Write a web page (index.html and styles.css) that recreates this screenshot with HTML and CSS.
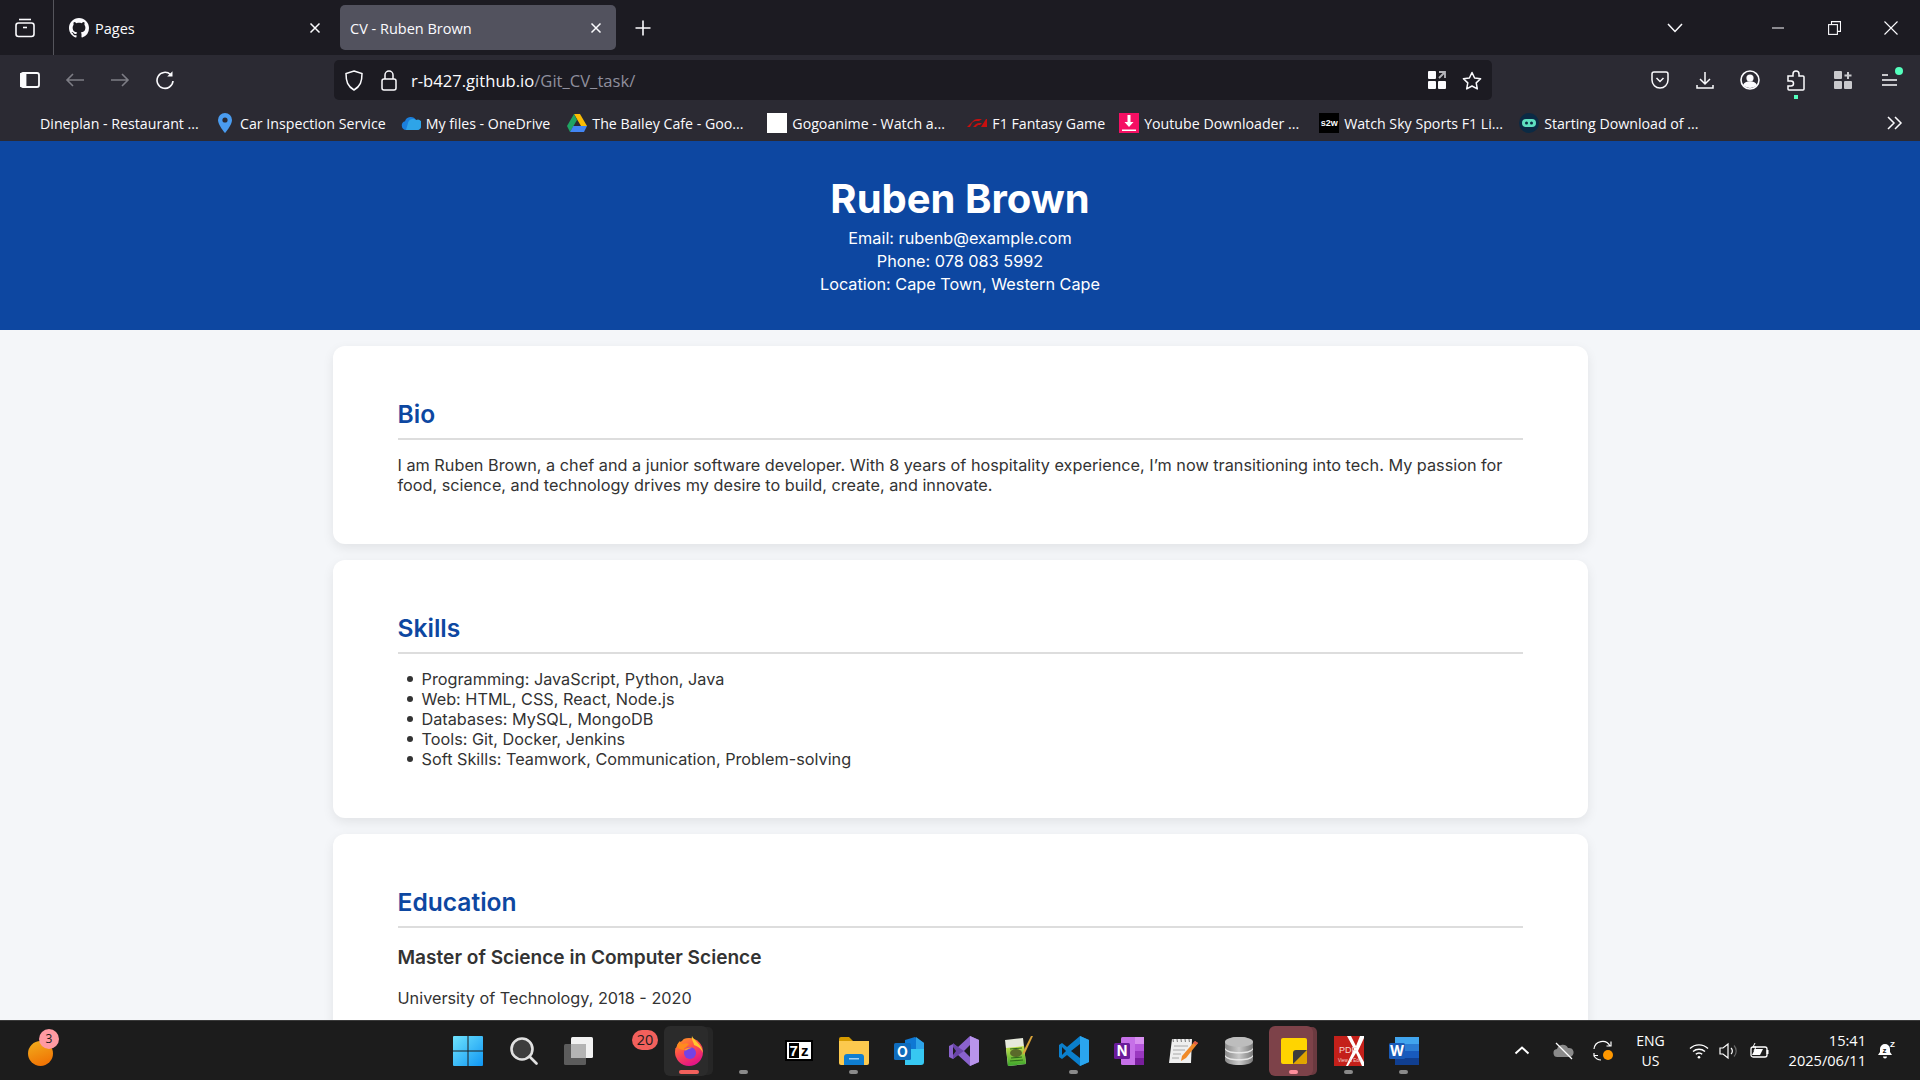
FILE: index.html
```html
<!DOCTYPE html>
<html lang="en">
<head>
  <meta charset="UTF-8">
  <title>CV - Ruben Brown</title>
  <link rel="stylesheet" href="styles.css">
</head>
<body>
  <div class="tabbar">
    <div class="tab-view">
      <svg width="20" height="20" viewBox="0 0 20 20" fill="none" stroke="#fbfbfe" stroke-width="1.6"><path d="M4 1.500h12"/><rect x="1" y="5" width="18" height="13.500" rx="2.500"/><path d="M8 9.500h4"/></svg>
    </div>
    <div class="tab tab-first">
      <svg width="20" height="20" viewBox="0 0 16 16" fill="#fbfbfe"><path d="M8 0C3.58 0 0 3.58 0 8c0 3.54 2.29 6.53 5.47 7.59.4.07.55-.17.55-.38 0-.19-.01-.82-.01-1.49-2.01.37-2.53-.49-2.69-.94-.09-.23-.48-.94-.82-1.13-.28-.15-.68-.52-.01-.53.63-.01 1.08.58 1.23.82.72 1.21 1.87.87 2.33.66.07-.52.28-.87.51-1.07-1.78-.2-3.64-.89-3.64-3.95 0-.87.31-1.59.82-2.15-.08-.2-.36-1.02.08-2.12 0 0 .67-.21 2.2.82.64-.18 1.32-.27 2-.27.68 0 1.36.09 2 .27 1.53-1.04 2.2-.82 2.2-.82.44 1.1.16 1.92.08 2.12.51.56.82 1.27.82 2.15 0 3.07-1.87 3.75-3.65 3.95.29.25.54.73.54 1.48 0 1.07-.01 1.93-.01 2.2 0 .21.15.46.55.38A8.013 8.013 0 0016 8c0-4.42-3.58-8-8-8z"/></svg>
      <span class="tab-title">Pages</span>
      <svg width="12" height="12" viewBox="0 0 12 12" stroke="#fbfbfe" stroke-width="1.5"><path d="M1.500 1.500l9 9M10.500 1.500l-9 9"/></svg>
    </div>
    <div class="tab tab-active">
      <span class="tab-title">CV - Ruben Brown</span>
      <svg width="12" height="12" viewBox="0 0 12 12" stroke="#fbfbfe" stroke-width="1.5"><path d="M1.500 1.500l9 9M10.500 1.500l-9 9"/></svg>
    </div>
    <svg class="new-tab" width="16" height="16" viewBox="0 0 16 16" stroke="#fbfbfe" stroke-width="1.6"><path d="M8 .5v15M.5 8h15"/></svg>
    <div class="win-controls">
      <svg class="tab-list" width="16" height="10" viewBox="0 0 16 10" fill="none" stroke="#fbfbfe" stroke-width="1.5"><path d="M1 1l7 7.500L15 1"/></svg>
      <svg class="win-min" width="12" height="2" viewBox="0 0 12 2" stroke="#fbfbfe"><path d="M0 1h12"/></svg>
      <svg class="win-max" width="13" height="14" viewBox="0 0 13 14" fill="none" stroke="#fbfbfe" stroke-width="1.100"><rect x=".6" y="3.600" width="8.800" height="9.800"/><path d="M3.500 3.500V.6h9v9.800H9.500"/></svg>
      <svg class="win-close" width="14" height="14" viewBox="0 0 14 14" stroke="#fbfbfe" stroke-width="1.100"><path d="M.5.5l13 13M13.500.5l-13 13"/></svg>
    </div>
  </div>

  <div class="toolbar">
    <svg class="tool-side" width="20" height="16" viewBox="0 0 20 16" fill="none" stroke="#fbfbfe" stroke-width="1.800"><rect x="1" y="1" width="18" height="14" rx="2"/><path d="M1 2h4.500v12H1z" fill="#fbfbfe"/></svg>
    <svg class="tool-back" width="20" height="16" viewBox="0 0 20 16" fill="none" stroke="#7d7d85" stroke-width="1.6"><path d="M19 8H2M8 2L2 8l6 6"/></svg>
    <svg class="tool-fwd" width="20" height="16" viewBox="0 0 20 16" fill="none" stroke="#7d7d85" stroke-width="1.6"><path d="M1 8h17M12 2l6 6-6 6"/></svg>
    <svg class="tool-reload" width="20" height="20" viewBox="0 0 20 20" fill="none" stroke="#fbfbfe" stroke-width="1.6"><path d="M15.500 4.500A8 8 0 1 0 18 11"/><path d="M17.500 1.200v5.300h-5.300z" fill="#fbfbfe" stroke="none"/></svg>
    <div class="urlbar">
      <svg width="18" height="21" viewBox="0 0 18 21" fill="none" stroke="#fbfbfe" stroke-width="1.5"><path d="M9 1l8 2.600c0 8-1.600 12.600-8 16.400C2.600 16.200 1 11.600 1 3.600z"/></svg>
      <svg class="url-lock" width="16" height="21" viewBox="0 0 16 21" fill="none" stroke="#fbfbfe" stroke-width="1.5"><rect x="1" y="9" width="14" height="11" rx="2"/><path d="M4 9V5a4 4 0 0 1 8 0v4"/></svg>
      <span class="url-text">r-b427.github.io<span class="url-path">/Git_CV_task/</span></span>
      <svg width="18" height="18" viewBox="0 0 18 18" fill="#fbfbfe"><rect width="8" height="8" rx="1"/><rect y="10" width="8" height="8" rx="1"/><rect x="10" y="10" width="8" height="8" rx="1"/><path d="M11 1h6v6M16.500 1.500L11 7" fill="none" stroke="#b5b5bb" stroke-width="1.800"/></svg>
      <svg class="url-star" width="20" height="19" viewBox="0 0 20 19" fill="none" stroke="#fbfbfe" stroke-width="1.500"><path d="M10 1.500l2.600 5.500 6 .8-4.400 4.100 1.100 6L10 15l-5.300 2.900 1.100-6L1.400 7.800l6-.8z" stroke-linejoin="round"/></svg>
    </div>
    <div class="tool-right">
      <svg width="18" height="18" viewBox="0 0 18 18" fill="none" stroke="#fbfbfe" stroke-width="1.500"><path d="M1 3a2 2 0 0 1 2-2h12a2 2 0 0 1 2 2v6a8 8 0 0 1-16 0z"/><path d="M5.500 7L9 10.500 12.500 7"/></svg>
      <svg width="18" height="19" viewBox="0 0 18 19" fill="none" stroke="#fbfbfe" stroke-width="1.500"><path d="M9 1v12M4 8l5 5 5-5M1 14v3h16v-3"/></svg>
      <svg class="tool-account" width="20" height="20" viewBox="0 0 20 20" fill="none" stroke="#fbfbfe" stroke-width="1.600"><circle cx="10" cy="10" r="9"/><circle cx="10" cy="8" r="2.800" fill="#fbfbfe"/><path d="M4 15c1-2.500 3-3 6-3s5 .5 6 3c-3 3-9 3-12 0z" fill="#fbfbfe"/></svg>
      <div class="tool-ext">
        <svg width="18" height="21" viewBox="0 0 18 21" fill="none" stroke="#fbfbfe" stroke-width="1.500"><path d="M1 6h5V4a3 3 0 0 1 6 0v2h4a1 1 0 0 1 1 1v12a1 1 0 0 1-1 1H2a1 1 0 0 1-1-1v-3h3a2.500 2.500 0 0 0 0-5H1z"/></svg>
        <span class="ext-dot"></span>
      </div>
      <svg class="tool-apps" width="18" height="18" viewBox="0 0 18 18" fill="#c9c9cd"><rect width="8" height="8" rx="1"/><rect y="10" width="8" height="8" rx="1"/><rect x="10" y="10" width="8" height="8" rx="1"/><path d="M13 1h2v2.500h2.500v2H15V8h-2V5.500h-2.500v-2H13z"/></svg>
      <div class="tool-menu">
        <svg width="16" height="14" viewBox="0 0 16 14" stroke="#fbfbfe" stroke-width="1.500"><path d="M0 2h6M0 7h15M0 12h15"/></svg>
        <span class="menu-dot"></span>
      </div>
    </div>
  </div>

  <div class="bookmarks">
    <div class="bm bm-long">
      <span class="bm-noicon"></span>
      <span>Dineplan - Restaurant ...</span>
    </div>
    <div class="bm">
      <svg width="20" height="20" viewBox="-3 0 20 20"><path d="M7 0a7 7 0 0 0-7 7c0 5 7 13 7 13s7-8 7-13a7 7 0 0 0-7-7z" fill="#4a9cf0"/><circle cx="7" cy="7" r="2.600" fill="#2b2a33"/></svg>
      <span>Car Inspection Service</span>
    </div>
    <div class="bm bm-drive">
      <svg width="20" height="14" viewBox="0 0 20 14"><path d="M5 14a4.500 4.500 0 0 1-1-8.800A6 6 0 0 1 15 4a4.500 4.500 0 0 1 1 10z" fill="#1b7fdc"/><path d="M7 7a5 5 0 0 1 8-3 4 4 0 0 1 5 6c0 2-1 4-4 4H5z" fill="#2ea4e8"/></svg>
      <span>My files - OneDrive</span>
    </div>
    <div class="bm bm-long">
      <svg width="20" height="18" viewBox="0 0 20 18"><path d="M7 0h6l7 12h-6z" fill="#fbbc04"/><path d="M7 0l3 6-7 12-3-6z" fill="#1fa463"/><path d="M3 18l3.300-6H20l-3 6z" fill="#4285f4"/></svg>
      <span>The Bailey Cafe - Goo...</span>
    </div>
    <div class="bm bm-long">
      <span class="bm-blank"></span>
      <span>Gogoanime - Watch a...</span>
    </div>
    <div class="bm bm-f1">
      <svg width="20" height="8" viewBox="0 0 20 8" fill="#c80f0f"><path d="M0 8l5-5c2-2 3-3 6-3h4l-3 2H9C7 2 6 3 5 4L3 8zM6 8l2-2c1-1 2-2 4-2h3l-2 2h-1c-1 0-2 .5-3 2zM14 8l5-8h1v8z"/></svg>
      <span>F1 Fantasy Game</span>
    </div>
    <div class="bm bm-long">
      <svg width="20" height="20" viewBox="0 0 20 20"><rect width="20" height="20" fill="#f50f63"/><path d="M8.500 2h3v7h3L10 14 5.500 9h3z" fill="#fff"/><path d="M3 16.500h14v1.500H3z" fill="#fff"/></svg>
      <span>Youtube Downloader ...</span>
    </div>
    <div class="bm bm-long">
      <span class="bm-s2w">s2w</span>
      <span>Watch Sky Sports F1 Li...</span>
    </div>
    <div class="bm bm-long">
      <svg width="20" height="20" viewBox="0 0 20 20"><circle cx="10" cy="10" r="10" fill="#0b2a44"/><rect x="3" y="6" width="14" height="8" rx="4" fill="#5fe0c0"/><circle cx="7.500" cy="10" r="1.500" fill="#0b2a44"/><circle cx="12.500" cy="10" r="1.500" fill="#0b2a44"/></svg>
      <span>Starting Download of ...</span>
    </div>
    <svg class="bm-more" width="16" height="14" viewBox="0 0 16 14" fill="none" stroke="#fbfbfe" stroke-width="1.500"><path d="M1 1l6 6-6 6M8 1l6 6-6 6"/></svg>
  </div>

  <div class="page">
    <header class="cv-header">
      <h1>Ruben Brown</h1>
      <p>Email: rubenb@example.com</p>
      <p>Phone: 078 083 5992</p>
      <p>Location: Cape Town, Western Cape</p>
    </header>
    <main class="cv-main">
      <section class="card">
        <h2>Bio</h2>
        <p>I am Ruben Brown, a chef and a junior software developer. With 8 years of hospitality experience, I’m now transitioning into tech. My passion for food, science, and technology drives my desire to build, create, and innovate.</p>
      </section>
      <section class="card">
        <h2>Skills</h2>
        <ul>
          <li>Programming: JavaScript, Python, Java</li>
          <li>Web: HTML, CSS, React, Node.js</li>
          <li>Databases: MySQL, MongoDB</li>
          <li>Tools: Git, Docker, Jenkins</li>
          <li>Soft Skills: Teamwork, Communication, Problem-solving</li>
        </ul>
      </section>
      <section class="card">
        <h2>Education</h2>
        <h3>Master of Science in Computer Science</h3>
        <p>University of Technology, 2018 - 2020</p>
      </section>
    </main>
  </div>

  <div class="taskbar">
    <div class="widget">
      <span class="widget-blob"></span>
      <span class="widget-badge">3</span>
    </div>
    <div class="task-icons">
      <div class="slot slot-nudge">
        <svg width="30" height="30" viewBox="0 0 30 30"><defs><linearGradient id="winG" x1="0" y1="0" x2="1" y2="1"><stop offset="0" stop-color="#6fe3fd"/><stop offset="1" stop-color="#0f96f3"/></linearGradient></defs><path d="M1 0h13.500v14.500H0V1a1 1 0 0 1 1-1zM15.500 0H29a1 1 0 0 1 1 1v13.500H15.500zM0 15.500h14.500V30H1a1 1 0 0 1-1-1zM15.500 15.500H30V29a1 1 0 0 1-1 1H15.500z" fill="url(#winG)"/></svg>
      </div>
      <div class="slot">
        <svg width="28" height="28" viewBox="0 0 28 28" fill="#3d3d3d" stroke="#e0e0e0" stroke-width="2.600"><circle cx="12" cy="12" r="10.500"/><path d="M19.500 19.500l7 7" stroke-linecap="round"/></svg>
      </div>
      <div class="slot slot-nudge">
        <svg width="30" height="30" viewBox="0 0 30 30"><rect x="1" y="8" width="22" height="21" rx="1.500" fill="#5c5c5c"/><rect x="8" y="1" width="22" height="21" rx="1.500" fill="#f2f2f2"/><rect x="8" y="8" width="15" height="14" fill="#b4b4b4"/></svg>
      </div>
      <div class="slot">
        <span class="count-badge">20</span>
      </div>
      <div class="slot slot-active">
        <svg width="30" height="30" viewBox="0 0 30 30"><defs><linearGradient id="foxG" x1="0" y1="0" x2=".5" y2="1"><stop offset="0" stop-color="#ffa21e"/><stop offset=".5" stop-color="#ff4f4a"/><stop offset="1" stop-color="#e31587"/></linearGradient></defs><circle cx="15" cy="16" r="14" fill="url(#foxG)"/><path d="M0 0h12L8 5 4 7 2 12 0 12z" fill="#2b2b2b"/><path d="M18 0c1 4 10 8 11 17-2-5-6-7-9-8 0-3-3-5-2-9z" fill="#ffc72e"/><path d="M3 11c0-3 2-5 3-6 0 2 1 3 3 3 2-1 4-1 6 0l-3 3c-2 1-2 2-2 3-3 0-5-1-7-3z" fill="#ff8a1e"/><circle cx="16" cy="17" r="6" fill="#7542e5"/><path d="M10 14c2-2 5-3 8-2-2 0-4 1-5 2-1 .5-2 .5-3 0z" fill="#ff9a2e"/></svg>
        <span class="indicator indicator-red"></span>
      </div>
      <div class="slot">
        <span class="indicator"></span>
      </div>
      <div class="slot">
        <div class="icon-7z"><span class="seven">7</span><span>z</span></div>
      </div>
      <div class="slot">
        <svg width="30" height="28" viewBox="0 0 30 28"><path d="M0 2a2 2 0 0 1 2-2h8l4 4H0z" fill="#d79b00"/><path d="M0 4h30v22a2 2 0 0 1-2 2H2a2 2 0 0 1-2-2z" fill="#fcc94e"/><path d="M5 20a3 3 0 0 1 3-3h14a3 3 0 0 1 3 3v8H5z" fill="#0f7ed1"/><rect x="10" y="21" width="10" height="1.500" fill="#9fd0f5"/></svg>
        <span class="indicator"></span>
      </div>
      <div class="slot">
        <svg width="30" height="28" viewBox="0 0 30 28"><path d="M11 3l10-3 9 6v6H11z" fill="#0f78d4"/><path d="M22 0l8 6v6h-8z" fill="#2da3e8"/><path d="M11 12h19v13a3 3 0 0 1-3 3H11z" fill="#37c8f2"/><rect y="6" width="17" height="17" rx="1.500" fill="#0f6cbd"/><text class="icon-letter" x="8.500" y="20" text-anchor="middle">O</text></svg>
      </div>
      <div class="slot">
        <svg width="30" height="30" viewBox="0 0 30 30"><path d="M21 0l9 4v22l-9 4-12-11-5 4-4-2V10l4-2 5 3z" fill="#8a62cc"/><path d="M21 0l9 4v22l-9 4z" fill="#b994ec"/><path d="M9 11l6 4-6 4-5 4V7z" fill="#6a45a8"/><path d="M21 9l-6 6 6 6z" fill="#1c1c1c"/><path d="M4 11l3 4-3 4z" fill="#1c1c1c"/></svg>
      </div>
      <div class="slot">
        <svg width="28" height="30" viewBox="0 0 28 30"><defs><linearGradient id="nppG" x1="0" y1="0" x2="0" y2="1"><stop offset="0" stop-color="#c6e24e"/><stop offset="1" stop-color="#3aa52a"/></linearGradient></defs><path d="M0 4l18-2 3 26-18 2z" fill="#e6e9dc"/><path d="M1 12l18-2 2 18-18 2z" fill="url(#nppG)"/><ellipse cx="11" cy="17" rx="6" ry="4" fill="#5a6a2a"/><path d="M5 13l12-1M6 22l11-1M5 25l13-1" stroke="#2f6a1c" stroke-width="1.200"/><path d="M26 0h2l-8 17-2.500 2 .5-3z" fill="#d9a33a"/></svg>
      </div>
      <div class="slot">
        <svg width="30" height="30" viewBox="0 0 30 30"><path d="M21 0l9 4v22l-9 4L8 19l-5 4-3-2V9l3-2 5 4z" fill="#0b7fcc"/><path d="M21 0l9 4v22l-9 4z" fill="#2aa5ee"/><path d="M21 8l-9 7 9 7z" fill="#1c1c1c"/><path d="M3 11l4 4-4 4z" fill="#1c1c1c"/></svg>
        <span class="indicator"></span>
      </div>
      <div class="slot">
        <svg width="30" height="28" viewBox="0 0 30 28"><rect x="7" width="23" height="28" rx="1.500" fill="#c670e8"/><rect x="21" width="9" height="7" fill="#d88ff0"/><rect x="21" y="7" width="9" height="7" fill="#b658dc"/><rect x="21" y="14" width="9" height="7" fill="#9a38c0"/><rect x="21" y="21" width="9" height="7" fill="#7a1f9e"/><rect y="6" width="16" height="16" rx="1.500" fill="#6a1b9a"/><text class="icon-letter" x="8" y="19" text-anchor="middle">N</text></svg>
      </div>
      <div class="slot">
        <svg width="30" height="26" viewBox="0 0 30 26"><path d="M3 1h20l-1 24H0z" fill="#efefef"/><path d="M4 1l.4 3M8 1l.4 3M12 1l.4 3M16 1l.4 3M20 1l.4 3" stroke="#777"/><path d="M5 8h14M4 12h12M4 16h8M3 20h7" stroke="#a8a8a8"/><path d="M26 3l3 2-12 15-5 3 1-5z" fill="#f08a28"/><path d="M26 3l3 2-2 2-3-2z" fill="#e05a4a"/></svg>
      </div>
      <div class="slot">
        <svg width="30" height="28" viewBox="0 0 30 28"><defs><linearGradient id="dbG" x1="0" y1="0" x2="1" y2="0"><stop offset="0" stop-color="#8a8a8a"/><stop offset=".5" stop-color="#c8c8c8"/><stop offset="1" stop-color="#7a7a7a"/></linearGradient></defs><path d="M1 5c0-3 6-5 14-5s14 2 14 5v18c0 3-6 5-14 5S1 26 1 23z" fill="url(#dbG)"/><ellipse cx="15" cy="5" rx="14" ry="5" fill="#bdbdbd"/><path d="M1 11c2 3 7 4 14 4s12-1 14-4v1.500c-2 3-7 4-14 4s-12-1-14-4zM1 18c2 3 7 4 14 4s12-1 14-4v1.500c-2 3-7 4-14 4s-12-1-14-4z" fill="#e8e8e8"/></svg>
      </div>
      <div class="slot slot-sticky">
        <svg width="26" height="26" viewBox="0 0 26 26"><rect width="26" height="26" rx="2" fill="#ffd400"/><path d="M12 26L26 12v11a3 3 0 0 1-3 3z" fill="#e0a400"/><path d="M12 26v-11a3 3 0 0 1 3-3h11z" fill="#3c3c3c"/></svg>
        <span class="indicator indicator-pink"></span>
      </div>
      <div class="slot">
        <svg width="30" height="30" viewBox="0 0 30 30"><rect width="30" height="30" fill="#c4201a"/><path d="M13 0h4l5 10 4-10h4v2l-6 13 6 11v4h-2l-6-13-8 13h-2l8-17z" fill="#fff"/><text class="icon-pdf" x="5" y="17">PDF</text><text class="icon-pdf-sub" x="4" y="26">View &amp; Edit</text></svg>
        <span class="indicator"></span>
      </div>
      <div class="slot">
        <svg width="30" height="28" viewBox="0 0 30 28"><rect x="6" width="24" height="7" fill="#41a5ee"/><rect x="6" y="7" width="24" height="7" fill="#2b7cd3"/><rect x="6" y="14" width="24" height="7" fill="#185abd"/><rect x="6" y="21" width="24" height="7" fill="#103f91"/><rect y="6" width="16" height="16" rx="1.500" fill="#1a5bb8"/><text class="icon-letter" x="8" y="19" text-anchor="middle">W</text></svg>
        <span class="indicator"></span>
      </div>
    </div>
    <div class="tray">
      <svg class="tray-up" width="16" height="9" viewBox="0 0 16 9" fill="none" stroke="#fff" stroke-width="2"><path d="M1.500 7.500L8 1.500l6.500 6"/></svg>
      <svg class="tray-cloud" width="22" height="18" viewBox="0 0 22 18"><path d="M5 15a4 4 0 0 1-1-8A6 6 0 0 1 15 6a4.500 4.500 0 0 1 2 9z" fill="#8a8a8a"/><path d="M3 1l16 16" stroke="#fff" stroke-width="1.200"/></svg>
      <svg class="tray-sync" width="22" height="22" viewBox="0 0 22 22" fill="none" stroke="#fff" stroke-width="1.200"><path d="M1 9a8.500 8.500 0 0 1 16-3M18 1.500V6h-4.500M5 15.500H1M1 13v3c2 3 4 4 7 4"/><circle cx="15" cy="15" r="5" fill="#ff9800" stroke="none"/></svg>
      <div class="tray-lang"><span>ENG</span><span>US</span></div>
      <svg class="tray-wifi" width="20" height="16" viewBox="0 0 20 16" fill="none" stroke="#fff" stroke-width="1.400"><path d="M1 5.500a13 13 0 0 1 18 0M4 8.500a9 9 0 0 1 12 0M6.800 11.300a4.500 4.500 0 0 1 6.400 0"/><circle cx="10" cy="14.300" r="1.300" fill="#fff" stroke="none"/></svg>
      <svg class="tray-vol" width="20" height="18" viewBox="0 0 20 18" fill="none" stroke="#fff" stroke-width="1.200"><path d="M1 6h3l5-4v14l-5-4H1z"/><path d="M12 6a4 4 0 0 1 0 6"/><path d="M15 3.500a8 8 0 0 1 0 11" stroke="#666"/></svg>
      <svg class="tray-batt" width="20" height="16" viewBox="0 0 20 16" fill="none" stroke="#fff" stroke-width="1.300"><rect x="1" y="4" width="16" height="10" rx="2"/><path d="M17.500 7v4" stroke-width="2"/><path d="M2 12l3-6h8l-3 6z" fill="#fff" stroke="none"/><path d="M5 0L3 4h3L4 8" stroke-width="1"/></svg>
      <div class="tray-clock"><span>15:41</span><span>2025/06/11</span></div>
      <svg class="tray-bell" width="18" height="20" viewBox="0 0 18 20" fill="#fff"><path d="M7 3a5 5 0 0 0-5 5v3l-2 3h14l-2-3V8a5 5 0 0 0-5-5z"/><path d="M5 15.500h4a2 2 0 0 1-4 0z"/><text class="bell-z bell-z-in" x="4.500" y="12">z</text><text class="bell-z" x="12" y="6">Z</text></svg>
    </div>
  </div>
</body>
</html>
```

FILE: styles.css
```css
* {
  box-sizing: border-box;
}
body {
  margin: 0;
  height: 1080px;
  overflow: hidden;
  display: flex;
  flex-direction: column;
  background: #f4f6f9;
  font-family: Inter, "Noto Sans", sans-serif;
  color: #333;
}
svg {
  flex: none;
  display: block;
}

/* browser tabs */
.tabbar {
  height: 55px;
  flex: none;
  display: flex;
  align-items: center;
  background: #1c1b22;
  color: #fbfbfe;
  font: 14.5px "Open Sans", sans-serif;
}
.tab-view {
  width: 54px;
  height: 55px;
  padding-left: 15px;
  display: flex;
  align-items: center;
  border-right: 1px solid #55555c;
}
.tab {
  height: 45px;
  margin-left: 15px;
  display: flex;
  align-items: center;
}
.tab-first {
  width: 252px;
}
.tab-title {
  flex: 1;
  padding: 1px 0 0 6px;
}
.tab-active {
  width: 276px;
  margin-left: 19px;
  padding: 0 14px 0 4px;
  background: #52525e;
  border-radius: 5px;
}
.new-tab {
  margin-left: 19px;
}
.win-controls {
  margin-left: auto;
  display: flex;
  align-items: center;
}
.tab-list {
  margin-right: 89px;
}
.win-min {
  margin-right: 44px;
}
.win-max {
  margin-right: 43px;
}
.win-close {
  margin-right: 22px;
}

/* toolbar */
.toolbar {
  height: 45px;
  flex: none;
  display: flex;
  align-items: center;
  padding-top: 5px;
  background: #2b2a33;
}
.tool-side {
  margin-left: 20px;
}
.tool-back, .tool-fwd, .tool-reload {
  margin-left: 25px;
}
.urlbar {
  width: 1158px;
  height: 40px;
  margin-left: 159px;
  padding: 0 10px 0 11px;
  display: flex;
  align-items: center;
  background: #1c1b22;
  border-radius: 5px;
  color: #fbfbfe;
}
.url-lock {
  margin-left: 18px;
}
.url-text {
  flex: 1;
  margin-left: 14px;
  font: 16.6px "Open Sans", sans-serif;
}
.url-path {
  color: #8f8f9d;
}
.url-star {
  margin-left: 16px;
}
.tool-right {
  margin-left: 159px;
  display: flex;
  align-items: center;
  gap: 27px;
}
.tool-account {
  margin-left: -1px;
}
.tool-apps {
  margin-left: 2px;
}
.tool-menu {
  margin-left: 3px;
}
.tool-ext, .tool-menu {
  position: relative;
}
.ext-dot {
  position: absolute;
  left: 7px;
  top: 25px;
  width: 4px;
  height: 4px;
  background: #54ffbd;
}
.menu-dot {
  position: absolute;
  right: -5px;
  top: -6px;
  width: 8px;
  height: 8px;
  border-radius: 50%;
  background: #54ffbd;
}

/* bookmarks */
.bookmarks {
  height: 41px;
  flex: none;
  display: flex;
  align-items: center;
  padding: 5px 0 0 15px;
  background: #2b2a33;
  color: #fbfbfe;
  font: 14.2px "Open Sans", sans-serif;
  white-space: nowrap;
}
.bm {
  display: flex;
  align-items: center;
  gap: 5px;
  margin-right: 15px;
}
/* long titles are cut to one fixed width */
.bm-long {
  width: 200px;
  margin-right: 0;
}
.bm-drive {
  margin-right: 17px;
}
.bm-f1 {
  margin-right: 14px;
}
.bm-noicon {
  width: 20px;
}
.bm-blank {
  width: 20px;
  height: 20px;
  background: #fff;
}
.bm-s2w {
  width: 20px;
  height: 20px;
  background: #000;
  font: 700 9px/20px "Liberation Sans", sans-serif;
  text-align: center;
}
.bm-more {
  margin-left: auto;
  margin-right: 17px;
}

/* CV page */
.page {
  flex: 1;
  min-height: 0;
  overflow: hidden;
}
.cv-header {
  height: 189px;
  padding-top: 34px;
  background: #0d47a1;
  color: #fff;
  text-align: center;
}
.cv-header h1 {
  margin: 0 0 4px;
  font-size: 40px;
  font-weight: 700;
  line-height: 48px;
}
.cv-header p {
  margin: 0;
  font-size: 16.25px;
  line-height: 23px;
}
.cv-main {
  width: 1255px;
  margin: 16px auto 0;
  display: flex;
  flex-direction: column;
  gap: 16px;
}
.card {
  padding: 32px 65px 49px;
  background: #fff;
  border-radius: 12px;
  box-shadow: 0 4px 12px rgba(0, 0, 0, 0.08);
  font-size: 16.25px;
  line-height: 20px;
}
.card h2 {
  margin: 22px 0 15px;
  padding-bottom: 9px;
  border-bottom: 2px solid #ddd;
  color: #0d47a1;
  font-size: 24.6px;
  font-weight: 600;
  line-height: 29px;
}
.card p {
  margin: 0;
}
.card ul {
  margin: 0;
  padding-left: 24px;
  list-style: none;
}
.card li {
  position: relative;
}
.card li::before {
  content: "";
  position: absolute;
  left: -15px;
  top: 7px;
  width: 6px;
  height: 6px;
  border-radius: 50%;
  background: #333;
}
.card h3 {
  margin: 17px 0 19px;
  font-size: 19.1px;
  font-weight: 600;
  line-height: 24px;
}

/* windows taskbar */
.taskbar {
  height: 60px;
  flex: none;
  position: relative;
  display: flex;
  align-items: center;
  background: #1c1c1c;
  border-top: 1px solid #3a3a3a;
  color: #fff;
}
.widget {
  position: relative;
  width: 30px;
  height: 40px;
  margin-left: 26px;
}
.widget-blob {
  position: absolute;
  left: 2px;
  top: 10px;
  width: 25px;
  height: 25px;
  border-radius: 50%;
  background: linear-gradient(160deg, #f2b01e, #f06a00);
}
.widget-badge {
  position: absolute;
  left: 13px;
  top: -2px;
  width: 20px;
  height: 20px;
  border-radius: 50%;
  background: #ff9aa2;
  color: #1c1c1c;
  font: 12px/20px "Open Sans", sans-serif;
  text-align: center;
}
.task-icons {
  margin-left: 385px;
  display: flex;
}
.slot {
  position: relative;
  width: 55px;
  height: 50px;
  display: flex;
  align-items: center;
  justify-content: center;
}
.slot-nudge {
  padding-right: 2px;
}
.slot-active::before, .slot-sticky::before {
  content: "";
  position: absolute;
  left: 3px;
  top: 0;
  width: 44px;
  height: 50px;
  border-radius: 6px;
  background: #2b2b2b;
  box-shadow: 6px 0 0 -1px #262626;
}
.slot-sticky::before {
  background: #7d4249;
  box-shadow: 5px 0 0 -1px #6b3a40;
}
.slot svg {
  position: relative;
}
.indicator {
  position: absolute;
  left: 23px;
  bottom: 2px;
  width: 9px;
  height: 4px;
  border-radius: 2px;
  background: #8a8a8a;
}
.indicator-red {
  left: 18px;
  width: 20px;
  background: #f2605c;
}
.indicator-pink {
  background: #ff8f9c;
}
.count-badge {
  position: absolute;
  left: 26px;
  top: 4px;
  width: 26px;
  height: 20px;
  border-radius: 10px;
  background: #f2605c;
  color: #1c1c1c;
  font: 14.5px/20px "Open Sans", sans-serif;
  text-align: center;
}
.icon-7z {
  width: 28px;
  height: 21px;
  padding: 0 2px;
  display: flex;
  align-items: center;
  background: #fff;
  border: 2px solid #000;
  color: #000;
  font: 700 15px/15px "Liberation Sans", sans-serif;
}
.seven {
  width: 12px;
  margin-right: 2px;
  background: #000;
  color: #fff;
  text-align: center;
}
.icon-letter {
  fill: #fff;
  font: 700 14px Inter, sans-serif;
}
.icon-pdf {
  fill: #f6d5d0;
  font: 9px "Liberation Sans", sans-serif;
}
.icon-pdf-sub {
  fill: #f6d5d0;
  font: 4.5px "Liberation Sans", sans-serif;
}
.bell-z {
  font: 700 8px "Liberation Sans", sans-serif;
}
.bell-z-in {
  fill: #1c1c1c;
}
.tray {
  position: absolute;
  right: 0;
  top: 0;
  height: 59px;
  display: flex;
  align-items: center;
  font: 14px "Open Sans", sans-serif;
}
.tray-up {
  margin-right: 23px;
}
.tray-cloud {
  margin-right: 18px;
}
.tray-sync {
  margin-right: 21px;
}
.tray-lang {
  width: 30px;
  margin-right: 23px;
  display: flex;
  flex-direction: column;
  align-items: center;
  line-height: 20px;
}
.tray-wifi {
  margin-right: 10px;
}
.tray-vol {
  margin-right: 11px;
}
.tray-batt {
  margin-right: 19px;
}
.tray-clock {
  margin-bottom: 2px;
  display: flex;
  flex-direction: column;
  align-items: flex-end;
  font-size: 14.6px;
  line-height: 20px;
}
.tray-bell {
  margin: 0 24px 0 12px;
}
```
